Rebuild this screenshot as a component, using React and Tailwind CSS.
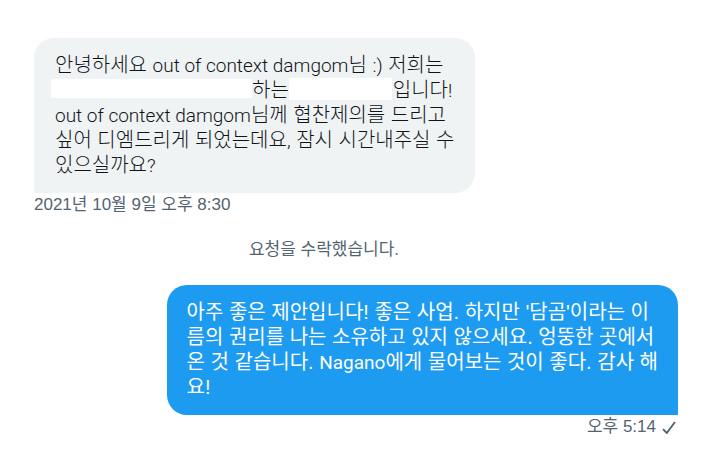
import React from 'react';

// Latin letters run wide next to Hangul, so they are set one size down
const Latin = ({ children }) => (
  <span className="text-[19px] font-['Roboto',sans-serif]">{children}</span>
);

const Redacted = ({ className }) => (
  <span aria-hidden="true" className={`inline-block bg-white align-top ${className}`} />
);

const CheckIcon = () => (
  <svg viewBox="0 0 14 14" className="w-[14px] h-[14px]" fill="none" stroke="currentColor" strokeWidth="1.9" aria-hidden="true">
    <path d="M1 9.2 L4.8 13 L13 2" />
  </svg>
);

const incoming = [
  <>안녕하세요 <Latin>out of context damgom</Latin>님 <Latin>:)</Latin> 저희는</>,
  <>
    <Redacted className="w-[201px] h-[19px] -ml-1 mt-px" />
    하는
    <Redacted className="w-[103px] h-[22px] mr-px" />
    입니다<Latin>!</Latin>
  </>,
  <><Latin>out of context damgom</Latin>님께 협찬제의를 드리고</>,
  <>싶어 디엠드리게 되었는데요<Latin>,</Latin> 잠시 시간내주실 수</>,
  <>있으실까요<Latin>?</Latin></>,
];

const outgoing = [
  "아주 좋은 제안입니다! 좋은 사업. 하지만 '담곰'이라는 이",
  '름의 권리를 나는 소유하고 있지 않으세요. 엉뚱한 곳에서',
  <>온 것 같습니다. <Latin>Nagano</Latin>에게 물어보는 것이 좋다. 감사 해</>,
  '요!',
];

const Bubble = ({ lines, className }) => (
  <div className={`py-[15px] text-[20px] leading-[25px] whitespace-nowrap ${className}`}>
    {lines.map((line, index) => (
      <p key={index} className="h-[25px]">{line}</p>
    ))}
  </div>
);

export default function App() {
  return (
    <main className="bg-white pt-[38px] pl-[34px] pr-10 text-[17px] leading-6 text-[#536471] font-['Liberation_Sans','Noto_Sans_CJK_KR',sans-serif]">
      <div className="flex flex-col items-start">
        <Bubble
          lines={incoming}
          className="px-[21px] rounded-[20px] rounded-bl-none bg-[#eff3f4] text-[#0f1419] font-light"
        />
        <time>2021년 10월 9일 오후 8:30</time>
      </div>

      <p className="mt-[21px] pr-16 text-center">요청을 수락했습니다.</p>

      <div className="mt-[23px] flex flex-col items-end">
        <Bubble
          lines={outgoing}
          className="px-5 rounded-[20px] rounded-br-none bg-[#1d9bf0] text-white font-normal"
        />
        <div className="flex items-center gap-1.5 pr-0.5">
          <time>오후 5:14</time>
          <CheckIcon />
        </div>
      </div>
    </main>
  );
}
